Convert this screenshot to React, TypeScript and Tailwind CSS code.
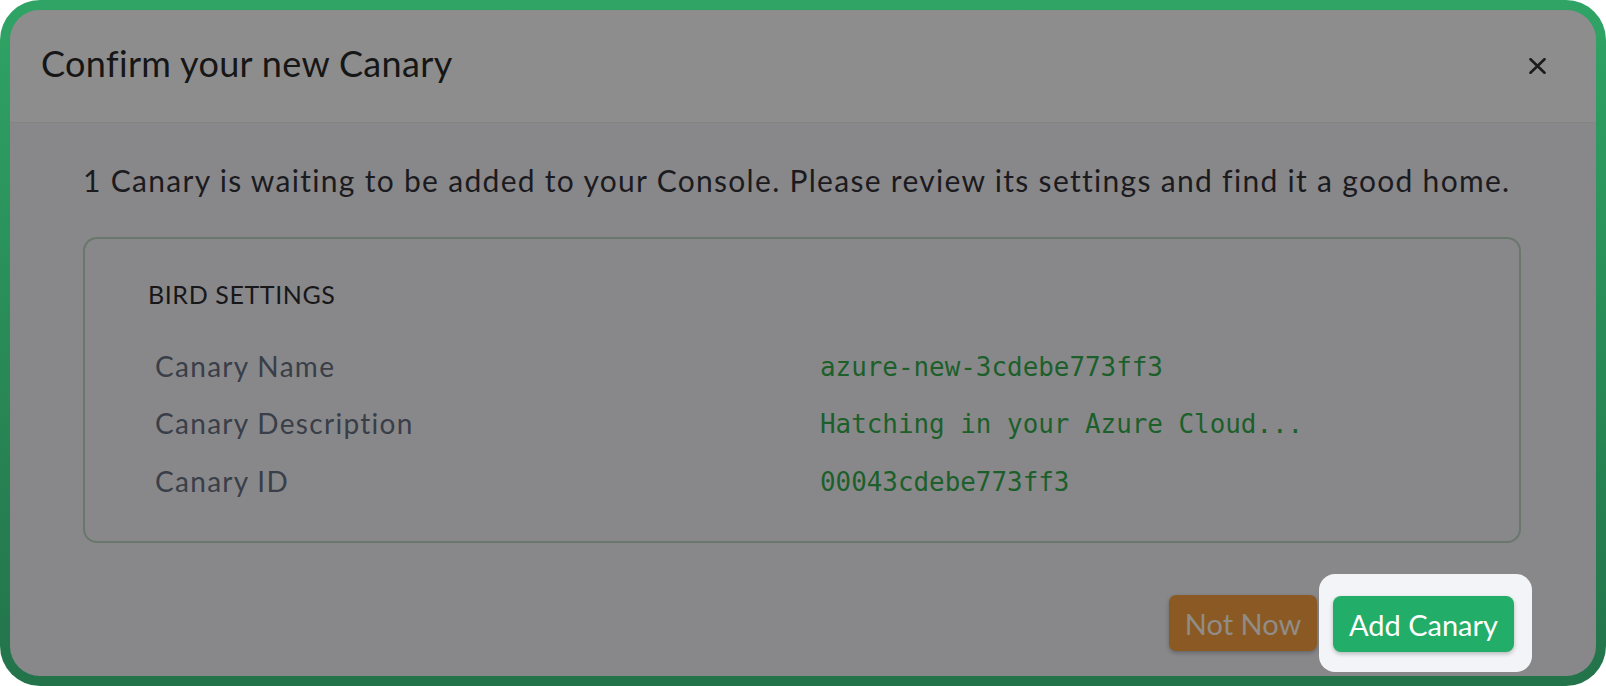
import React from "react";

const sans = { fontFamily: "Lato, 'Noto Sans', sans-serif" } as const;
const mono = { fontFamily: "'DejaVu Sans Mono', 'Liberation Mono', monospace" } as const;

const rows = [
  { label: "Canary Name", value: "azure-new-3cdebe773ff3" },
  { label: "Canary Description", value: "Hatching in your Azure Cloud..." },
  { label: "Canary ID", value: "00043cdebe773ff3" },
];

export default function App() {
  return (
    <div className="w-[1606px] h-[686px] bg-white" style={sans}>
      <div className="w-full h-full rounded-[40px] p-[10px] bg-gradient-to-b from-[#2fa465] to-[#23734a]">
        <div className="w-full h-full rounded-[30px] overflow-hidden bg-[#88888a] flex flex-col">
          <div className="h-[113px] shrink-0 bg-[#8d8d8d] border-b border-[#838384] flex items-center justify-between pl-[31px] pr-[50px] pb-[6px]">
            <h1 className="text-[36px] leading-[40px] tracking-[0.35px] text-[#161616] font-normal">Confirm your new Canary</h1>
            <svg width="17" height="16" viewBox="0 0 17 16" className="text-[#1c1c1c] mt-[6px]">
              <path d="M1.5 1.2 L15.5 14.8 M15.5 1.2 L1.5 14.8" stroke="currentColor" strokeWidth="2.6" strokeLinecap="round" />
            </svg>
          </div>
          <div className="pl-[73px] pr-[75px] pt-[39px]">
            <p className="text-[30px] leading-[36px] tracking-[1.3px] text-[#1b1b1f] whitespace-nowrap">
              1 Canary is waiting to be added to your Console. Please review its settings and find it a good home.
            </p>
            <div className="mt-[39px] h-[306px] border-2 border-[#6a776c] rounded-[14px] pl-[63px] pt-[40px]">
              <div className="h-[30px] leading-[30px] text-[25px] tracking-[0.6px] text-[#17171a] uppercase">Bird Settings</div>
              <div className="mt-[28px] pl-[7px]">
                {rows.map((r) => (
                  <div key={r.label} className="h-[57.5px] flex items-center">
                    <div className="w-[665px] text-[28px] leading-[34px] tracking-[1.3px] text-[#393e48]">{r.label}</div>
                    <div className="text-[25.9px] leading-[34px] text-[#1c5f2b] pt-[2px]" style={mono}>
                      {r.value}
                    </div>
                  </div>
                ))}
              </div>
            </div>
          </div>
          <div className="mt-[31px] flex justify-end items-center pr-[64px]">
            <button className="w-[148px] h-[56px] rounded-[7px] bg-[#8b5a24] text-[#908c88] text-[29px] leading-none shadow-[0_2px_4px_rgba(0,0,0,0.25)] mr-[2px]">
              Not Now
            </button>
            <div className="bg-[#f3f4f8] rounded-[16px] pl-[14px] pr-[18px] pt-[22px] pb-[20px]">
              <button className="w-[181px] h-[56px] rounded-[8px] bg-[#22ad69] text-white text-[29px] leading-none shadow-[0_2px_4px_rgba(0,0,0,0.25)]">
                Add Canary
              </button>
            </div>
          </div>
        </div>
      </div>
    </div>
  );
}
